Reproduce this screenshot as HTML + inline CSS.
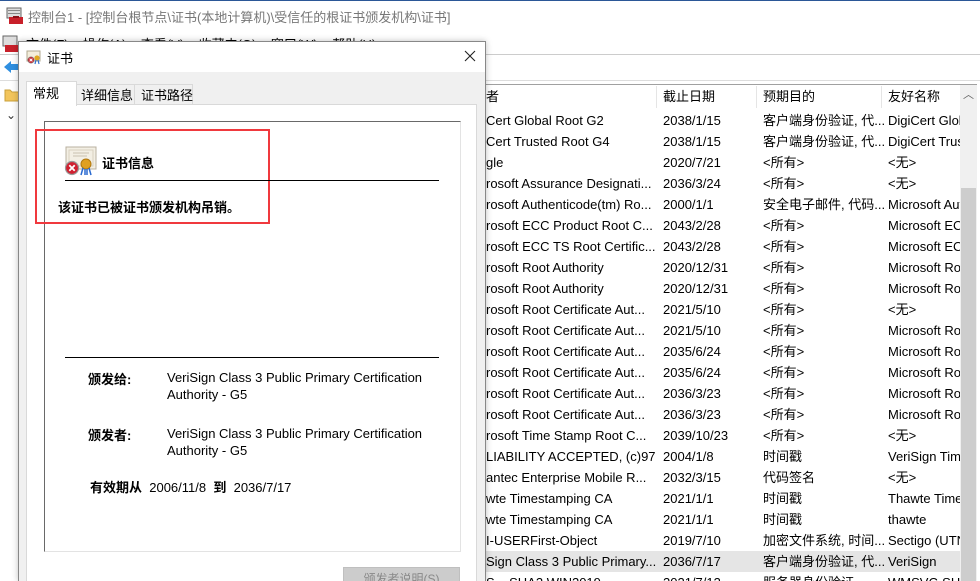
<!DOCTYPE html>
<html style="overflow:hidden;width:980px;height:581px"><head><meta charset="utf-8"><style>
*{margin:0;padding:0;box-sizing:border-box}
body{width:980px;height:581px;overflow:hidden;background:#fff;font-family:"Liberation Sans","Noto Sans CJK SC",sans-serif;font-size:13px;color:#000;position:relative}
.a{position:absolute;white-space:nowrap}
.row{position:absolute;left:480px;width:480px;height:21px;line-height:21px}
.row span{position:absolute;overflow:hidden;white-space:nowrap}
.c1{left:6px;width:170px}.c2{left:183px}.c3{left:283px}.c4{left:408px;width:72px}
</style></head><body>
<svg class="a" style="left:6px;top:7px" width="18" height="18" viewBox="0 0 18 18"><rect x="1" y="1" width="14" height="10" fill="#ddd" stroke="#666"/><rect x="2" y="3" width="12" height="1" fill="#888"/><rect x="2" y="6" width="12" height="1" fill="#888"/><rect x="3" y="10" width="14" height="7" fill="#c8202a"/><rect x="7" y="9" width="6" height="2" fill="#8a1018"/></svg>
<div class="a" style="left:28px;top:7px;font-size:13px;color:#777">控制台1 - [控制台根节点\证书(本地计算机)\受信任的根证书颁发机构\证书]</div>
<div class="a" style="left:0;top:0;width:980px;height:1px;background:#2b5797"></div>
<svg class="a" style="left:2px;top:35px" width="18" height="18" viewBox="0 0 18 18"><rect x="1" y="1" width="14" height="10" fill="#ddd" stroke="#666"/><rect x="3" y="10" width="14" height="7" fill="#c8202a"/></svg>
<div class="a" style="left:26px;top:34px;color:#000">文件(F)&nbsp;&nbsp;&nbsp;&nbsp;操作(A)&nbsp;&nbsp;&nbsp;&nbsp;查看(V)&nbsp;&nbsp;&nbsp;&nbsp;收藏夹(O)&nbsp;&nbsp;&nbsp;&nbsp;窗口(W)&nbsp;&nbsp;&nbsp;&nbsp;帮助(H)</div>
<div class="a" style="left:0;top:54px;width:980px;height:1px;background:#ccc"></div>
<svg class="a" style="left:3px;top:59px" width="16" height="16" viewBox="0 0 16 16"><path d="M1 8 L8 2 L8 5 L15 5 L15 11 L8 11 L8 14 Z" fill="#2f8fe0"/></svg>
<div class="a" style="left:0;top:80px;width:980px;height:1px;background:#ddd"></div>
<svg class="a" style="left:4px;top:88px" width="16" height="14"><path d="M1 2h5l2 2h7v9H1z" fill="#f2c55c" stroke="#c9a03a"/></svg>
<div class="a" style="left:6px;top:108px;font-size:12px;color:#333">⌄</div>
<div class="a" style="left:480px;top:84px;width:497px;height:497px;border:1px solid #a0a0a0;border-bottom:none"></div>
<div class="a" style="left:480px;top:86px;width:480px;height:22px;line-height:22px">
<span class="a" style="left:6px">者</span>
<span class="a" style="left:176px;top:0;width:1px;height:22px;background:#e5e5e5"></span><span class="a" style="left:183px">截止日期</span>
<span class="a" style="left:276px;top:0;width:1px;height:22px;background:#e5e5e5"></span><span class="a" style="left:283px">预期目的</span>
<span class="a" style="left:401px;top:0;width:1px;height:22px;background:#e5e5e5"></span><span class="a" style="left:408px">友好名称</span></div>
<div class="a" style="left:960px;top:85px;width:17px;height:496px;background:#f0f0f0"></div>
<div class="a" style="left:961px;top:188px;width:15px;height:393px;background:#cdcdcd"></div>
<div class="a" style="left:963px;top:86px;font-size:11px;color:#606060">︿</div>
<div class="row" style="top:551px;background:#e5e5e5;width:480px"></div>
<div class="row" style="top:110px"><span class="c1">Cert Global Root G2</span><span class="c2">2038/1/15</span><span class="c3">客户端身份验证, 代...</span><span class="c4">DigiCert Global</span></div>
<div class="row" style="top:131px"><span class="c1">Cert Trusted Root G4</span><span class="c2">2038/1/15</span><span class="c3">客户端身份验证, 代...</span><span class="c4">DigiCert Trusted</span></div>
<div class="row" style="top:152px"><span class="c1">gle</span><span class="c2">2020/7/21</span><span class="c3">&lt;所有&gt;</span><span class="c4">&lt;无&gt;</span></div>
<div class="row" style="top:173px"><span class="c1">rosoft Assurance Designati...</span><span class="c2">2036/3/24</span><span class="c3">&lt;所有&gt;</span><span class="c4">&lt;无&gt;</span></div>
<div class="row" style="top:194px"><span class="c1">rosoft Authenticode(tm) Ro...</span><span class="c2">2000/1/1</span><span class="c3">安全电子邮件, 代码...</span><span class="c4">Microsoft Auth</span></div>
<div class="row" style="top:215px"><span class="c1">rosoft ECC Product Root C...</span><span class="c2">2043/2/28</span><span class="c3">&lt;所有&gt;</span><span class="c4">Microsoft ECC</span></div>
<div class="row" style="top:236px"><span class="c1">rosoft ECC TS Root Certific...</span><span class="c2">2043/2/28</span><span class="c3">&lt;所有&gt;</span><span class="c4">Microsoft ECC</span></div>
<div class="row" style="top:257px"><span class="c1">rosoft Root Authority</span><span class="c2">2020/12/31</span><span class="c3">&lt;所有&gt;</span><span class="c4">Microsoft Root</span></div>
<div class="row" style="top:278px"><span class="c1">rosoft Root Authority</span><span class="c2">2020/12/31</span><span class="c3">&lt;所有&gt;</span><span class="c4">Microsoft Root</span></div>
<div class="row" style="top:299px"><span class="c1">rosoft Root Certificate Aut...</span><span class="c2">2021/5/10</span><span class="c3">&lt;所有&gt;</span><span class="c4">&lt;无&gt;</span></div>
<div class="row" style="top:320px"><span class="c1">rosoft Root Certificate Aut...</span><span class="c2">2021/5/10</span><span class="c3">&lt;所有&gt;</span><span class="c4">Microsoft Root</span></div>
<div class="row" style="top:341px"><span class="c1">rosoft Root Certificate Aut...</span><span class="c2">2035/6/24</span><span class="c3">&lt;所有&gt;</span><span class="c4">Microsoft Root</span></div>
<div class="row" style="top:362px"><span class="c1">rosoft Root Certificate Aut...</span><span class="c2">2035/6/24</span><span class="c3">&lt;所有&gt;</span><span class="c4">Microsoft Root</span></div>
<div class="row" style="top:383px"><span class="c1">rosoft Root Certificate Aut...</span><span class="c2">2036/3/23</span><span class="c3">&lt;所有&gt;</span><span class="c4">Microsoft Root</span></div>
<div class="row" style="top:404px"><span class="c1">rosoft Root Certificate Aut...</span><span class="c2">2036/3/23</span><span class="c3">&lt;所有&gt;</span><span class="c4">Microsoft Root</span></div>
<div class="row" style="top:425px"><span class="c1">rosoft Time Stamp Root C...</span><span class="c2">2039/10/23</span><span class="c3">&lt;所有&gt;</span><span class="c4">&lt;无&gt;</span></div>
<div class="row" style="top:446px"><span class="c1">LIABILITY ACCEPTED, (c)97...</span><span class="c2">2004/1/8</span><span class="c3">时间戳</span><span class="c4">VeriSign Time</span></div>
<div class="row" style="top:467px"><span class="c1">antec Enterprise Mobile R...</span><span class="c2">2032/3/15</span><span class="c3">代码签名</span><span class="c4">&lt;无&gt;</span></div>
<div class="row" style="top:488px"><span class="c1">wte Timestamping CA</span><span class="c2">2021/1/1</span><span class="c3">时间戳</span><span class="c4">Thawte Time</span></div>
<div class="row" style="top:509px"><span class="c1">wte Timestamping CA</span><span class="c2">2021/1/1</span><span class="c3">时间戳</span><span class="c4">thawte</span></div>
<div class="row" style="top:530px"><span class="c1">I-USERFirst-Object</span><span class="c2">2019/7/10</span><span class="c3">加密文件系统, 时间...</span><span class="c4">Sectigo (UTN</span></div>
<div class="row" style="top:551px"><span class="c1">Sign Class 3 Public Primary...</span><span class="c2">2036/7/17</span><span class="c3">客户端身份验证, 代...</span><span class="c4">VeriSign</span></div>
<div class="row" style="top:572px"><span class="c1">S... SHA2 WIN2019</span><span class="c2">2021/7/13</span><span class="c3">服务器身份验证</span><span class="c4">WMSVC-SHA2</span></div>
<div class="a" style="left:18px;top:41px;width:468px;height:540px;background:#f0f0f0;border:1px solid #888;border-bottom:none;box-shadow:0 0 6px rgba(0,0,0,.25)"></div>
<div class="a" style="left:19px;top:42px;width:466px;height:30px;background:#fff"></div>
<svg class="a" style="left:26px;top:49px" width="16" height="16" viewBox="0 0 16 16"><rect x="1" y="2" width="13" height="10" fill="#f4eedc" stroke="#b0a890"/><circle cx="5" cy="11" r="3.2" fill="#c8202a" stroke="#888" stroke-width=".6"/><path d="M3.6 9.6l2.8 2.8M6.4 9.6l-2.8 2.8" stroke="#fff" stroke-width="1"/><circle cx="11" cy="9" r="2.6" fill="#e0a820"/><path d="M10 11l-1 4M12 11l1 4" stroke="#3070d0" stroke-width="1.2"/></svg>
<div class="a" style="left:47px;top:48px;font-size:13px">证书</div>
<svg class="a" style="left:464px;top:50px" width="12" height="12"><path d="M1 1L11 11M11 1L1 11" stroke="#222" stroke-width="1.1"/></svg>
<div class="a" style="left:76px;top:84px;width:59px;height:21px;background:#f0f0f0;border:1px solid #d9d9d9"></div>
<div class="a" style="left:134px;top:84px;width:59px;height:21px;background:#f0f0f0;border:1px solid #d9d9d9"></div>
<div class="a" style="left:81px;top:85px">详细信息</div>
<div class="a" style="left:141px;top:85px">证书路径</div>
<div class="a" style="left:26px;top:104px;width:451px;height:477px;background:#fff;border:1px solid #d9d9d9;border-bottom:none"></div>
<div class="a" style="left:26px;top:81px;width:51px;height:25px;background:#fff;border:1px solid #d9d9d9;border-bottom:none"></div>
<div class="a" style="left:33px;top:83px">常规</div>
<div class="a" style="left:44px;top:121px;width:417px;height:431px;border:1px solid #e3e3e3;border-left:1px solid #696969;border-top:1px solid #696969"></div>
<div class="a" style="left:35px;top:129px;width:235px;height:95px;border:2px solid #f0393e"></div>
<svg class="a" style="left:64px;top:146px" width="34" height="30" viewBox="0 0 34 30"><rect x="2" y="1" width="30" height="22" fill="#f3efe4" stroke="#b8b0a0"/><rect x="5" y="4" width="24" height="16" fill="none" stroke="#d8d0c0"/><path d="M9 7h16M9 10h14" stroke="#c8c0b0"/><circle cx="8" cy="22" r="6.5" fill="#d02030" stroke="#999" stroke-width="1.2"/><path d="M5.3 19.3l5.4 5.4M10.7 19.3l-5.4 5.4" stroke="#fff" stroke-width="1.8"/><circle cx="22" cy="18" r="5" fill="#e0a020" stroke="#b07810"/><path d="M19 22l-2 7M25 22l2 7M21 23l0 6M23 23l0 6" stroke="#2a6ad0" stroke-width="1.5"/></svg>
<div class="a" style="left:102px;top:153px;font-weight:bold">证书信息</div>
<div class="a" style="left:65px;top:180px;width:374px;height:1px;background:#000"></div>
<div class="a" style="left:58px;top:197px;font-weight:bold">该证书已被证书颁发机构吊销。</div>
<div class="a" style="left:65px;top:357px;width:374px;height:1px;background:#000"></div>
<div class="a" style="left:88px;top:369px;font-weight:bold">颁发给:</div>
<div class="a" style="left:167px;top:369px;line-height:17px">VeriSign Class 3 Public Primary Certification<br>Authority - G5</div>
<div class="a" style="left:88px;top:425px;font-weight:bold">颁发者:</div>
<div class="a" style="left:167px;top:425px;line-height:17px">VeriSign Class 3 Public Primary Certification<br>Authority - G5</div>
<div class="a" style="left:90px;top:477px"><b>有效期从</b>&nbsp;&nbsp;2006/11/8&nbsp;&nbsp;<b>到</b>&nbsp;&nbsp;2036/7/17</div>
<div class="a" style="left:343px;top:567px;width:117px;height:20px;background:#ccc;border:1px solid #bfbfbf;color:#888;text-align:center;line-height:22px;font-size:12px">颁发者说明(S)</div>
</body></html>
